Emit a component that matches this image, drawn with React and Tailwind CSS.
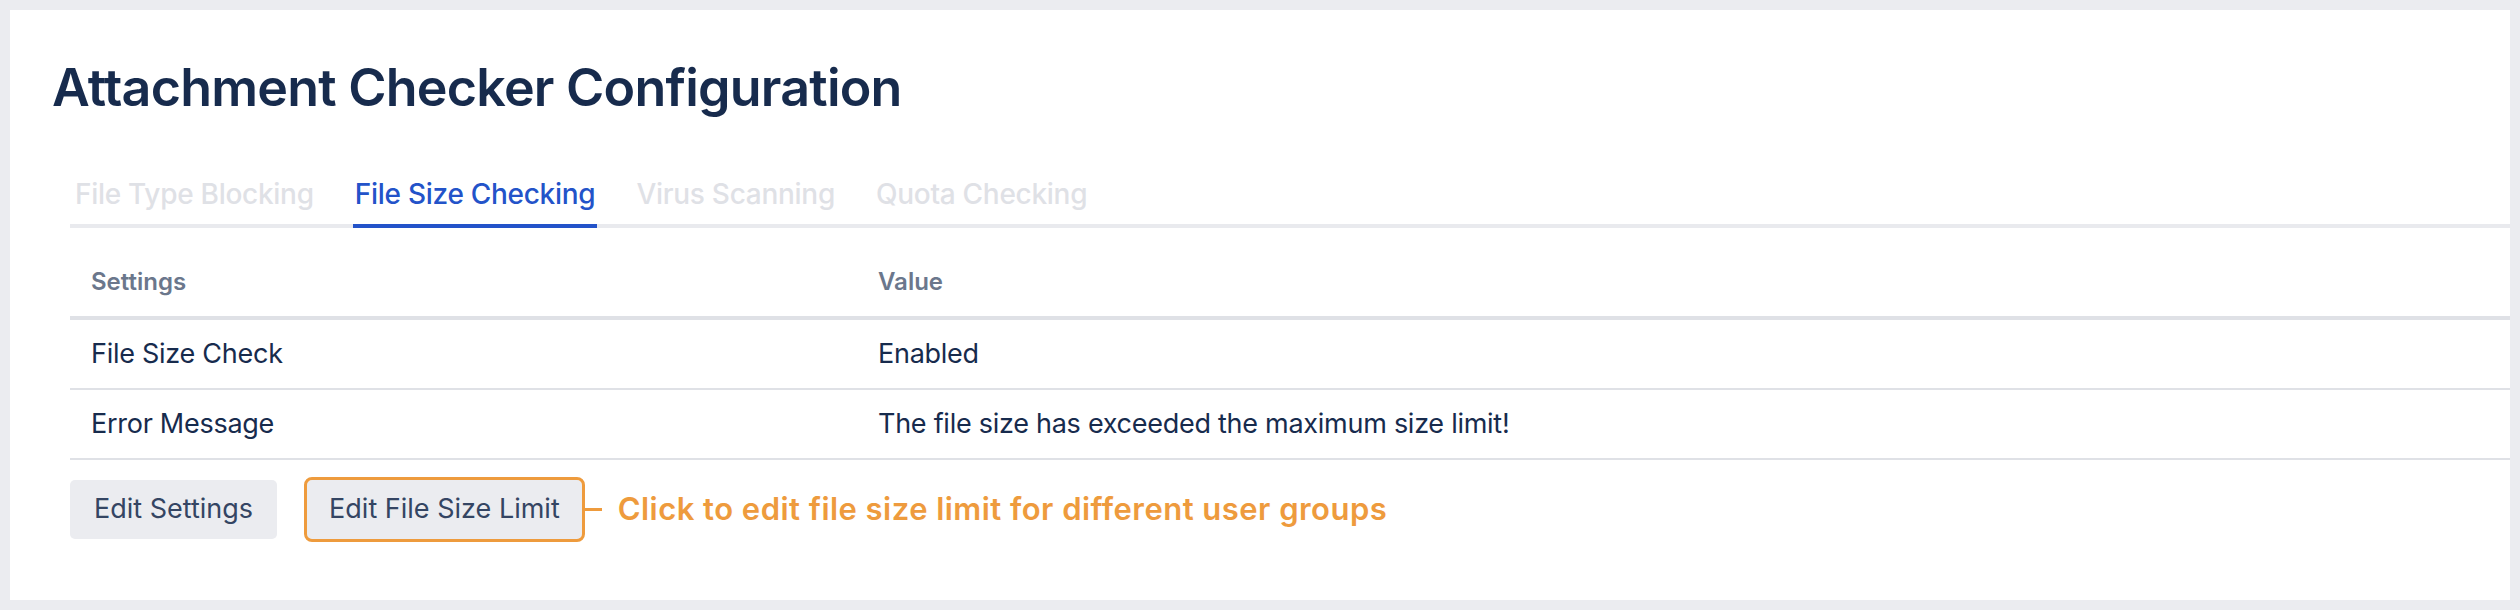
import React from 'react';

const tabs = ['File Type Blocking', 'File Size Checking', 'Virus Scanning', 'Quota Checking'];

const rows = [
  { name: 'File Size Check', value: 'Enabled' },
  { name: 'Error Message', value: 'The file size has exceeded the maximum size limit!' },
];

export default function App() {
  const active = 1;

  return (
    <div
      className="min-h-screen bg-[#ebecf0] p-[10px]"
      style={{ fontFamily: 'Inter, "Noto Sans", sans-serif' }}
    >
      <div className="h-[590px] bg-white pl-[42px] pt-[47px]">
        <h1 className="text-[52px] leading-[62px] font-semibold tracking-[-0.015em] text-[#172b4d]">
          Attachment Checker Configuration
        </h1>

        <div className="ml-[18px] mt-[55px]">
          {/* tabs */}
          <div className="flex gap-[37px] border-b-4 border-[#e9eaee] pl-[3px]">
            {tabs.map((t, i) => (
              <div
                key={t}
                className={`-mb-[4px] px-[2px] pb-[10px] text-[28px] leading-[40px] font-medium tracking-[-0.01em] ${
                  i === active
                    ? 'border-b-4 border-[#2353c9] text-[#2353c9]'
                    : 'border-b-4 border-transparent text-[#dfe1e6]'
                }`}
              >
                {t}
              </div>
            ))}
          </div>

          {/* settings table */}
          <div className="pt-[20px]">
            <div className="grid grid-cols-[787px_1fr] border-b-4 border-[#dfe1e6]">
              <div className="px-[21px] py-[18px] text-[24px] leading-[32px] font-semibold text-[#6b778c]">
                Settings
              </div>
              <div className="px-[21px] py-[18px] text-[24px] leading-[32px] font-semibold text-[#6b778c]">
                Value
              </div>
            </div>
            {rows.map((r) => (
              <div
                key={r.name}
                className="grid grid-cols-[787px_1fr] border-b-2 border-[#dfe1e6] text-[27px] leading-[36px] tracking-[-0.01em] text-[#172b4d]"
              >
                <div className="px-[21px] py-4">{r.name}</div>
                <div className="px-[21px] py-4">{r.value}</div>
              </div>
            ))}
          </div>

          {/* actions */}
          <div className="mt-[20px] flex items-center">
            <button className="h-[59px] rounded-[5px] bg-[#ebecf0] px-[24px] text-[27px] text-[#344563]">
              Edit Settings
            </button>
            <button className="ml-[30px] h-[59px] rounded-[5px] bg-[#ebecf0] px-[22px] text-[27px] text-[#344563] outline-[3px] outline-solid outline-[#ee9b3d]">
              Edit File Size Limit
            </button>
            <div className="ml-[2px] h-[3px] w-[18px] bg-[#ee9b3d]" />
            <span className="ml-[16px] text-[31px] font-semibold tracking-[0.015em] text-[#ee9b3d]">
              Click to edit file size limit for different user groups
            </span>
          </div>
        </div>
      </div>
    </div>
  );
}
